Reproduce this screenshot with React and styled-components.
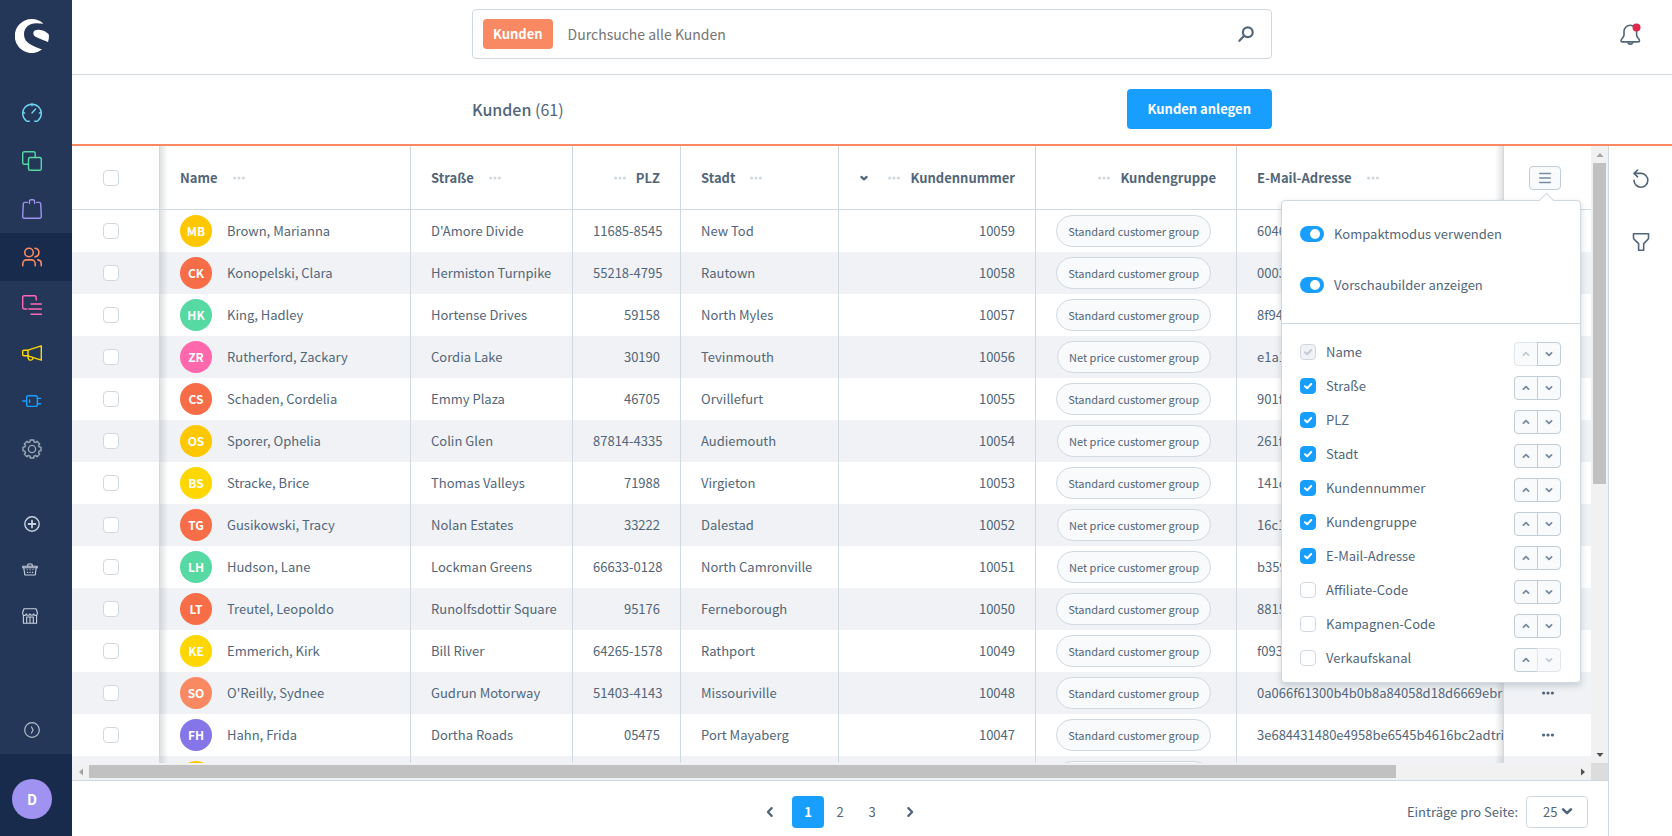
import React, { useState } from 'react';
import styled, { createGlobalStyle, css } from 'styled-components';

const GlobalStyle = createGlobalStyle`
  * {
    box-sizing: border-box;
  }

  body {
    margin: 0;
    background: #fff;
    color: #52667a;
    font-family: 'Noto Sans CJK SC', 'Open Sans', sans-serif;
    font-size: 13px;
    line-height: 20px;
  }

  button, input, select {
    font-family: inherit;
    font-size: inherit;
    line-height: inherit;
    color: inherit;
    margin: 0;
    padding: 0;
  }

  button {
    background: none;
    border: none;
    cursor: pointer;
  }

  svg {
    display: block;
    flex: none;
  }
`;

const Layout = styled.div`
  display: flex;
  height: 100vh;
  overflow: hidden;
`;

/* ---------- main menu ---------- */

const Menu = styled.aside`
  width: 72px;
  flex: none;
  display: flex;
  flex-direction: column;
  background: #243758;
`;

const Logo = styled.a`
  display: flex;
  justify-content: center;
  height: 89px;
  padding-top: 19px;
  padding-right: 8px;
  color: #fff;
`;

const MenuList = styled.nav`
  display: flex;
  flex-direction: column;
  margin-bottom: 28px;
`;

const MenuLink = styled.a`
  display: flex;
  align-items: center;
  height: ${props => (props.$small ? 46 : 48)}px;
  padding-left: ${props => props.$indent || 22}px;
  color: ${props => props.$color};
  background: ${props => (props.$active ? '#182b4d' : 'transparent')};
`;

const MenuToggle = styled.button`
  display: flex;
  align-items: center;
  justify-content: center;
  height: 48px;
  padding-right: 8px;
  margin-top: auto;
  color: #b3bfcc;
`;

const UserArea = styled.div`
  height: 82px;
  flex: none;
  padding: 25px 12px;
  background: #182b4d;
`;

const UserButton = styled.button`
  width: 40px;
  height: 40px;
  border-radius: 50%;
  background: #a092f0;
  color: #fff;
  font-size: 14px;
  font-weight: 700;
`;

/* ---------- page head ---------- */

const Page = styled.div`
  flex: 1;
  min-width: 0;
  display: flex;
  flex-direction: column;
`;

const HeadGrid = styled.div`
  display: grid;
  grid-template-columns: 1fr minmax(0, 800px) 1fr;
  flex: none;
`;

const SearchHeader = styled(HeadGrid)`
  height: 75px;
  padding-top: 9px;
  border-bottom: 1px solid #d1d9e0;
`;

const SearchBar = styled.div`
  grid-column: 2;
  display: flex;
  align-items: center;
  height: 50px;
  padding: 0 17px 0 10px;
  border: 1px solid #d1d9e0;
  border-radius: 4px;
`;

const SearchType = styled.button`
  height: 30px;
  padding: 0 10px;
  border-radius: 4px;
  background: #f88962;
  color: #fff;
  font-weight: 700;
`;

const SearchInput = styled.input`
  flex: 1;
  min-width: 0;
  padding: 0 15px;
  border: none;
  outline: none;
  font-size: 14px;

  &::placeholder {
    color: #757575;
  }
`;

const IconButton = styled.button`
  display: flex;
  align-items: center;
  justify-content: center;
`;

const Notifications = styled.div`
  display: flex;
  justify-content: flex-end;
  align-items: center;
  height: 50px;
  padding-right: 31px;
`;

const SmartBar = styled(HeadGrid)`
  height: 71px;
  align-items: center;
  padding-bottom: 1px;
  border-bottom: 2px solid #f88962;
`;

const SmartBarContent = styled.div`
  grid-column: 2;
  display: flex;
  align-items: center;
  justify-content: space-between;
`;

const Title = styled.h1`
  margin: 0;
  font-size: 16px;
  line-height: 24px;
  font-weight: 500;

  span {
    font-weight: 400;
  }
`;

const PrimaryButton = styled.button`
  height: 40px;
  padding: 0 21px;
  border-radius: 4px;
  background: #189eff;
  color: #fff;
  font-weight: 700;
`;

/* ---------- content ---------- */

const Body = styled.div`
  flex: 1;
  min-height: 0;
  display: flex;
`;

const Listing = styled.main`
  flex: 1;
  min-width: 0;
  display: flex;
  flex-direction: column;
`;

const SideTools = styled.aside`
  width: 64px;
  flex: none;
  display: flex;
  flex-direction: column;
  border-left: 1px solid #d1d9e0;

  button {
    height: 64px;
  }
`;

const ScrollFrame = styled.div`
  flex: 1;
  min-height: 0;
  display: grid;
  grid-template-columns: minmax(0, 1fr) 17px;
  grid-template-rows: minmax(0, 1fr) 17px;
  border-bottom: 1px solid #d1d9e0;
`;

const TableWrap = styled.div`
  overflow: hidden;
`;

const ScrollBar = styled.div`
  display: flex;
  flex-direction: ${props => (props.$vertical ? 'column' : 'row')};
  background: #f1f1f1;
`;

const ScrollArrow = styled.div`
  width: 17px;
  height: 17px;
  display: flex;
  align-items: center;
  justify-content: center;
  color: ${props => (props.$off ? '#a3a3a3' : '#505050')};
`;

const ScrollTrack = styled.div`
  flex: 1;
  padding: ${props => (props.$vertical ? '0 2px' : '2px 0')};
`;

const ScrollThumb = styled.div`
  width: ${props => (props.$vertical ? '100%' : props.$size)};
  height: ${props => (props.$vertical ? props.$size : '100%')};
  background: #c1c1c1;
`;

const ScrollCorner = styled.div`
  background: #dcdcdc;
`;

const Table = styled.table`
  width: 100%;
  table-layout: fixed;
  border-collapse: separate;
  border-spacing: 0;
`;

const cell = css`
  padding: 0 20px;
  border-right: 1px solid #d1d9e0;
  text-align: ${props => (props.$right ? 'right' : 'left')};
  white-space: nowrap;
  overflow: hidden;
`;

const shadowAfter = css`
  background-image: linear-gradient(to right, rgba(60, 70, 80, 0.16), rgba(60, 70, 80, 0));
  background-size: 8px 100%;
  background-repeat: no-repeat;
`;

const shadowBefore = css`
  border-right: none;
  background-image: linear-gradient(to left, rgba(60, 70, 80, 0.16), rgba(60, 70, 80, 0));
  background-size: 8px 100%;
  background-position: right top;
  background-repeat: no-repeat;
`;

const HeadCell = styled.th`
  ${cell}
  height: 64px;
  border-bottom: 1px solid #d1d9e0;
  font-weight: 700;
  ${props => props.$first && shadowAfter}
  ${props => props.$last && shadowBefore}
`;

const HeadLabel = styled.div`
  display: flex;
  align-items: center;
  flex-direction: ${props => (props.$right ? 'row-reverse' : 'row')};
  gap: ${props => (props.$right ? 10 : 15)}px;
`;

const HeadMenu = styled(IconButton)`
  color: #d1d9e0;
`;

const SortMark = styled.span`
  padding-right: 10px;
`;

const Cell = styled.td`
  ${cell}
  height: 42px;
  ${props => props.$first && shadowAfter}
  ${props => props.$last && shadowBefore}
`;

const Row = styled.tr`
  background: #fff;

  &:nth-child(even) {
    background: #f0f2f5;
  }
`;

const SelectHead = styled(HeadCell)`
  padding: 0 0 0 31px;
`;

const SelectCell = styled(Cell)`
  padding: 0 0 0 31px;
`;

const ActionHead = styled.th`
  position: relative;
  height: 64px;
  padding: 0 30px 0 0;
  border-left: 1px solid #d1d9e0;
  border-bottom: 1px solid #d1d9e0;
  text-align: left;
  font-weight: 400;
`;

const ActionCell = styled.td`
  padding: 0;
  border-left: 1px solid #d1d9e0;

  button {
    width: 100%;
  }
`;

const Customer = styled.div`
  display: flex;
  align-items: center;
  gap: 15px;
`;

const Avatar = styled.span`
  width: 32px;
  height: 32px;
  flex: none;
  border-radius: 50%;
  background: ${props => props.$color};
  color: #fff;
  font-size: 12px;
  font-weight: 700;
  line-height: 31px;
  text-align: center;
`;

const Pill = styled.span`
  display: block;
  width: fit-content;
  height: 32px;
  margin: 0 5px 0 auto;
  padding: 0 11px;
  border: 1px solid #d1d9e0;
  border-radius: 16px;
  background: #f9fafb;
  font-size: 11px;
  line-height: 30px;
`;

const Checkbox = styled.input.attrs({ type: 'checkbox' })`
  appearance: none;
  display: block;
  width: 16px;
  height: 16px;
  flex: none;
  border: 1px solid #d1d9e0;
  border-radius: 4px;
  background: #fff center / 14px 14px no-repeat;

  &:checked {
    border-color: #189eff;
    background-color: #189eff;
    background-image: url("data:image/svg+xml,%3Csvg xmlns='http://www.w3.org/2000/svg' viewBox='0 0 14 14' fill='none' stroke='%23fff' stroke-width='2' stroke-linecap='round' stroke-linejoin='round'%3E%3Cpath d='M4 7.2l2.2 2.1L10.2 5'/%3E%3C/svg%3E");
  }

  &:disabled {
    border-color: #d1d9e0;
    background-color: #f0f2f5;
    background-image: url("data:image/svg+xml,%3Csvg xmlns='http://www.w3.org/2000/svg' viewBox='0 0 14 14' fill='none' stroke='%23c2ccd6' stroke-width='2' stroke-linecap='round' stroke-linejoin='round'%3E%3Cpath d='M4 7.2l2.2 2.1L10.2 5'/%3E%3C/svg%3E");
  }
`;

/* ---------- column settings ---------- */

const SettingsButton = styled(IconButton)`
  width: 32px;
  height: 24px;
  margin-left: auto;
  border: 1px solid #c2ccd6;
  border-radius: 4px;
  background: #f9fafb;
  color: #758ca3;
`;

const Popover = styled.div`
  position: absolute;
  top: 54px;
  right: 10px;
  z-index: 10;
  width: 300px;
  border: 1px solid #d1d9e0;
  border-radius: 4px;
  background: #fff;
  box-shadow: 0 3px 6px rgba(120, 138, 155, 0.35);

  &::before {
    content: '';
    position: absolute;
    top: -6px;
    right: 28px;
    width: 10px;
    height: 10px;
    border: 1px solid #d1d9e0;
    border-right: none;
    border-bottom: none;
    background: #fff;
    transform: rotate(45deg);
  }
`;

const SwitchGroup = styled.div`
  display: flex;
  flex-direction: column;
  gap: 31px;
  padding: 23px 18px 28px;
  border-bottom: 1px solid #d1d9e0;
`;

const SwitchLabel = styled.label`
  display: flex;
  align-items: center;
  gap: 10px;
`;

const Switch = styled.input.attrs({ type: 'checkbox', role: 'switch' })`
  appearance: none;
  display: flex;
  width: 24px;
  height: 16px;
  padding: 3px 4px;
  border-radius: 8px;
  background: #c2ccd6;

  &::before {
    content: '';
    width: 10px;
    height: 10px;
    border-radius: 50%;
    background: #fff;
  }

  &:checked {
    justify-content: flex-end;
    background: #189eff;
  }
`;

const ColumnList = styled.ul`
  margin: 0;
  padding: 13px 19px 5px 18px;
  list-style: none;
`;

const ColumnItem = styled.li`
  display: flex;
  align-items: center;
  justify-content: space-between;
  height: 34px;
`;

const ColumnLabel = styled.label`
  display: flex;
  align-items: center;
  gap: 10px;
  padding-bottom: 4px;
`;

const MoveButtons = styled.div`
  display: flex;
`;

const MoveButton = styled(IconButton)`
  width: 24px;
  height: 24px;
  border: 1px solid #c2ccd6;
  border-radius: 4px 0 0 4px;
  background: #f9fafb;
  color: #758ca3;

  & + & {
    margin-left: -1px;
    border-radius: 0 4px 4px 0;
  }

  &:disabled {
    border-color: #e1e6eb;
    color: #c2ccd6;
  }
`;

/* ---------- pagination ---------- */

const Footer = styled.footer`
  display: grid;
  grid-template-columns: 1fr auto 1fr;
  align-items: start;
  height: 55px;
  flex: none;
  padding: 15px 20px 0;
`;

const Pages = styled.div`
  grid-column: 2;
  display: flex;
`;

const PageButton = styled.button`
  width: 32px;
  height: 32px;
  border-radius: 4px;
  background: ${props => (props.$active ? '#189eff' : 'none')};
  color: ${props => (props.$active ? '#fff' : 'inherit')};
  font-weight: ${props => (props.$active ? 700 : 400)};
`;

const PageArrow = styled(IconButton)`
  width: 44px;
  height: 32px;
`;

const PerPage = styled.label`
  display: flex;
  align-items: center;
  justify-content: flex-end;
  gap: 8px;
`;

const SelectBox = styled.span`
  position: relative;

  svg {
    position: absolute;
    top: 9px;
    right: 15px;
    pointer-events: none;
  }
`;

const Select = styled.select`
  appearance: none;
  display: block;
  width: 62px;
  height: 32px;
  padding-left: 16px;
  border: 1px solid #d1d9e0;
  border-radius: 4px;
  background: #fff;
`;

/* ---------- icons ---------- */

const Icon = ({ size = 20, box = 20, width = 1.4, children }) => (
  <svg
    width={size}
    height={size}
    viewBox={`0 0 ${box} ${box}`}
    fill="none"
    stroke="currentColor"
    strokeWidth={width}
    strokeLinecap="round"
    strokeLinejoin="round"
    aria-hidden="true"
  >
    {children}
  </svg>
);

const ShopLogo = () => (
  <svg width="34" height="34" viewBox="0 0 34 34" fill="currentColor" aria-hidden="true">
    <path d="M28.4 4.7A17 17 0 1 0 27 30.6C18.500 27 9 24.500 9 15.500 9 8.500 14 4.300 21.500 4.200c2.500 0 4.500.2 6.900.5z" />
    <path d="M18.300 14c.1-2.200 2.200-3.300 5.700-3.200 4 .1 7 1.900 9.700 4.500.5 2.700.2 5.200-.7 7.700-4-1.700-8.700-3.100-12-4.900-1.900-1.100-2.700-2.500-2.700-4.100z" />
  </svg>
);

const DashboardIcon = () => (
  <Icon>
    <path d="M7.3 18.3H5.6Q4.6 18.3 4 17.6A9.3 9.3 0 1 1 16 17.6Q15.4 18.3 14.4 18.3H12.7" />
    <path d="M10 .7v2M.7 10h2M17.3 10h2M10 10l3.6-4" />
  </Icon>
);

const ProductsIcon = () => (
  <Icon>
    <rect x="6.5" y="6.5" width="12.8" height="12.8" rx="1.6" />
    <path d="M6.5 13.2H2.3A1.6 1.6 0 0 1 .7 11.6V2.3A1.6 1.6 0 0 1 2.3.7h9.3a1.6 1.6 0 0 1 1.6 1.6v4.2" />
  </Icon>
);

const OrdersIcon = () => (
  <Icon>
    <path d="M7.4 4.6V2.4A1.7 1.7 0 0 1 9.1.7h1.8a1.7 1.7 0 0 1 1.7 1.7v2.2" />
    <path d="M5.2 3.4H3A1.7 1.7 0 0 0 1.3 5L.7 17.6a1.6 1.6 0 0 0 1.6 1.7h15.4a1.6 1.6 0 0 0 1.6-1.7L18.7 5A1.7 1.7 0 0 0 17 3.4h-2.2" />
  </Icon>
);

const CustomersIcon = () => (
  <Icon width={1.6}>
    <circle cx="7" cy="5.5" r="4.3" />
    <path d="M13 1.2c2.4.3 3.9 2.1 3.9 4.3S15.4 9.5 13 9.8" />
    <path d="M.8 18.8v-2.3a3.6 3.6 0 0 1 3.6-3.6h5.2a3.6 3.6 0 0 1 3.6 3.6v2.3M15.9 12.9a3.6 3.6 0 0 1 3.3 3.6v2.3" />
  </Icon>
);

const ContentIcon = () => (
  <Icon>
    <path d="M14.2 5V2.2A1.5 1.5 0 0 0 12.7.7H2.2A1.5 1.5 0 0 0 .7 2.2v10.3A1.5 1.5 0 0 0 2.2 14h2.6" />
    <path d="M9 9h10.500M6.800 14h12.700M9 19.200h10.500" />
  </Icon>
);

const MarketingIcon = () => (
  <Icon>
    <path d="M6 7.2L19.3 2.8v14.4L6 12.8z" />
    <path d="M6 7.2H1.7a1 1 0 0 0-1 1v3.6a1 1 0 0 0 1 1H6M5.8 13l.6 2.600a2 2 0 0 0 2.400 1.500l.8-.2a1.800 1.800 0 0 0 1.300-2" />
  </Icon>
);

const PlugIcon = () => (
  <Icon>
    <path d="M.7 10h3.9M15.4 7.4h3.200M15.4 12.8h3.200M7.600 9v2.200" />
    <rect x="4.6" y="4.8" width="10.8" height="10.6" rx="2" />
  </Icon>
);

// outline of the gear, four points for every tooth
const TEETH = 8;
const gearPoints = Array.from({ length: TEETH }, (_, i) => {
  const base = (i * Math.PI * 2) / TEETH - Math.PI / 2;
  return [[-0.2, 9.2], [0.2, 9.2], [0.25, 7.5], [0.53, 7.5]]
    .map(([a, r]) => `${10 + r * Math.cos(base + a)},${10 + r * Math.sin(base + a)}`)
    .join(' ');
}).join(' ');

const CogIcon = () => (
  <Icon>
    <polygon points={gearPoints} />
    <circle cx="10" cy="10" r="3.6" />
  </Icon>
);

const PlusIcon = () => (
  <Icon size={16} box={16}>
    <circle cx="8" cy="8" r="7.2" />
    <path d="M8 4.6v6.8M4.6 8h6.8" strokeWidth="1.8" />
  </Icon>
);

const BasketIcon = () => (
  <Icon size={16} box={16} width={1.1}>
    <path d="M.8 4.2h14.400v1.600H.8zM1.800 5.800l1 7.200h10.400l1-7.200M5.400 4l.8-2h3.600l.8 2" />
    <path d="M5 7.800h.3M7.900 7.800h.3M10.800 7.800h.3M5.400 10.400h.3M7.900 10.400h.3M10.400 10.400h.3" />
  </Icon>
);

const StoreIcon = () => (
  <Icon size={16} box={16} width={1.1}>
    <path d="M2 .7h12l1.300 3.600v1.200a1.800 1.800 0 0 1-3.600.3 1.900 1.900 0 0 1-3.700 0 1.900 1.900 0 0 1-3.700 0A1.800 1.800 0 0 1 .7 5.500V4.300zM1.400 7.200v8.100h13.200V7.200M4.700 15.300V9h6.600v6.300M8 9v6.300" />
  </Icon>
);

const ExpandIcon = () => (
  <Icon size={16} box={16} width={1.2}>
    <circle cx="8" cy="8" r="7.3" />
    <path d="M7.5 5l1.600 3-1.600 3" />
  </Icon>
);

const SearchIcon = () => (
  <Icon size={16} box={16} width={2.2}>
    <circle cx="9.8" cy="6.2" r="4.9" />
    <path d="M6 10l-4.600 4.800" />
  </Icon>
);

const BellIcon = () => (
  <svg width="21" height="22" viewBox="0 0 21 22" fill="none" stroke="currentColor" strokeWidth="1.6" strokeLinejoin="round" aria-hidden="true">
    <path d="M4 10V8.500a6.300 6.300 0 0 1 12.600 0V12c0 2.600 2.900 3.300 2.900 5.800 0 .8-.5 1.100-1.300 1.100H2.300c-.8 0-1.300-.3-1.300-1.100C1 15.300 4 14.600 4 12z" />
    <path d="M8 19.200a2.300 1.900 0 0 0 4.600 0" />
    <circle cx="16.5" cy="4.5" r="4" fill="#de294c" stroke="none" />
  </svg>
);

const ResetIcon = () => (
  <Icon size={20} width={1.6}>
    <path d="M3.500 5.400h6.900a6.900 6.900 0 1 1-7.400 6.900M6.600 2L3 5.400l3.600 3.400" />
  </Icon>
);

const FilterIcon = () => (
  <Icon size={20} width={1.6}>
    <path d="M2.500 1.800h15v4.200q0 .8-.6 1.400l-4.200 4.200v6.600H7.600v-6.600L3.200 7.400q-.7-.6-.7-1.400z" />
  </Icon>
);

const DotsIcon = () => (
  <svg width="12" height="4" viewBox="0 0 12 4" fill="currentColor" aria-hidden="true">
    <circle cx="1.6" cy="2" r="1.6" />
    <circle cx="6" cy="2" r="1.6" />
    <circle cx="10.4" cy="2" r="1.6" />
  </svg>
);

const ListIcon = () => (
  <Icon size={12} box={12} width={1.5}>
    <path d="M.7 1.500h10.600M.7 6h10.600M.7 10.500h10.600" />
  </Icon>
);

const turns = { down: 0, left: 90, up: 180, right: 270 };

const Chevron = ({ to = 'down', size = 8, width = 1.8 }) => (
  <Icon size={size} box={8} width={width}>
    <path d="M1.400 2.900L4 5.400l2.600-2.500" transform={`rotate(${turns[to]} 4 4)`} />
  </Icon>
);

const Triangle = ({ to }) => (
  <svg width="8" height="8" viewBox="0 0 8 8" fill="currentColor" aria-hidden="true">
    <path d="M.5 2h7L4 6z" transform={`rotate(${turns[to]} 4 4)`} />
  </svg>
);

/* ---------- data ---------- */

const menuItems = [
  { label: 'Dashboard', color: '#6ed5f0', icon: DashboardIcon },
  { label: 'Kataloge', color: '#57d9a3', icon: ProductsIcon },
  { label: 'Bestellungen', color: '#a092f0', icon: OrdersIcon },
  { label: 'Kunden', color: '#f88962', icon: CustomersIcon, active: true },
  { label: 'Inhalte', color: '#ff68b4', icon: ContentIcon },
  { label: 'Marketing', color: '#ffd700', icon: MarketingIcon },
  { label: 'Erweiterungen', color: '#189eff', icon: PlugIcon },
  { label: 'Einstellungen', color: '#9aa8b5', icon: CogIcon },
];

const channelItems = [
  { label: 'Verkaufskanal anlegen', indent: 24, icon: PlusIcon },
  { label: 'Headless', indent: 22, icon: BasketIcon },
  { label: 'Storefront', indent: 22, icon: StoreIcon },
];

const STD = 'Standard customer group';
const NET = 'Net price customer group';

const customers = [
  { initials: 'MB', color: '#ffc700', name: 'Brown, Marianna', street: "D'Amore Divide", zip: '11685-8545', city: 'New Tod', number: '10059', group: STD, mail: '6046' },
  { initials: 'CK', color: '#f76d48', name: 'Konopelski, Clara', street: 'Hermiston Turnpike', zip: '55218-4795', city: 'Rautown', number: '10058', group: STD, mail: '0003' },
  { initials: 'HK', color: '#57d9a3', name: 'King, Hadley', street: 'Hortense Drives', zip: '59158', city: 'North Myles', number: '10057', group: STD, mail: '8f94' },
  { initials: 'ZR', color: '#ff68ac', name: 'Rutherford, Zackary', street: 'Cordia Lake', zip: '30190', city: 'Tevinmouth', number: '10056', group: NET, mail: 'e1a1' },
  { initials: 'CS', color: '#f76d48', name: 'Schaden, Cordelia', street: 'Emmy Plaza', zip: '46705', city: 'Orvillefurt', number: '10055', group: STD, mail: '901f' },
  { initials: 'OS', color: '#ffc700', name: 'Sporer, Ophelia', street: 'Colin Glen', zip: '87814-4335', city: 'Audiemouth', number: '10054', group: NET, mail: '261f' },
  { initials: 'BS', color: '#ffd700', name: 'Stracke, Brice', street: 'Thomas Valleys', zip: '71988', city: 'Virgieton', number: '10053', group: STD, mail: '141d' },
  { initials: 'TG', color: '#f76d48', name: 'Gusikowski, Tracy', street: 'Nolan Estates', zip: '33222', city: 'Dalestad', number: '10052', group: NET, mail: '16c1' },
  { initials: 'LH', color: '#57d9a3', name: 'Hudson, Lane', street: 'Lockman Greens', zip: '66633-0128', city: 'North Camronville', number: '10051', group: NET, mail: 'b359' },
  { initials: 'LT', color: '#f76d48', name: 'Treutel, Leopoldo', street: 'Runolfsdottir Square', zip: '95176', city: 'Ferneborough', number: '10050', group: STD, mail: '8815' },
  { initials: 'KE', color: '#ffd700', name: 'Emmerich, Kirk', street: 'Bill River', zip: '64265-1578', city: 'Rathport', number: '10049', group: STD, mail: 'f093' },
  { initials: 'SO', color: '#f88962', name: "O'Reilly, Sydnee", street: 'Gudrun Motorway', zip: '51403-4143', city: 'Missouriville', number: '10048', group: STD, mail: '0a066f61300b4b0b8a84058d18d6669ebritn' },
  { initials: 'FH', color: '#8475e8', name: 'Hahn, Frida', street: 'Dortha Roads', zip: '05475', city: 'Port Mayaberg', number: '10047', group: STD, mail: '3e684431480e4958be6545b4616bc2adtrist' },
  { initials: '', color: '#ffc700', name: '', street: '', zip: '', city: '', number: '10046', group: STD, mail: '' },
];

const columns = [
  { label: 'Name', width: 251 },
  { label: 'Straße', width: 162 },
  { label: 'PLZ', width: 108, right: true },
  { label: 'Stadt', width: 158 },
  { label: 'Kundennummer', width: 197, right: true, sorted: true },
  { label: 'Kundengruppe', width: 201, right: true },
  { label: 'E-Mail-Adresse' },
];

const columnSettings = [
  { label: 'Name', visible: true, locked: true },
  { label: 'Straße', visible: true },
  { label: 'PLZ', visible: true },
  { label: 'Stadt', visible: true },
  { label: 'Kundennummer', visible: true },
  { label: 'Kundengruppe', visible: true },
  { label: 'E-Mail-Adresse', visible: true },
  { label: 'Affiliate-Code', visible: false },
  { label: 'Kampagnen-Code', visible: false },
  { label: 'Verkaufskanal', visible: false },
];

/* ---------- components ---------- */

function MainMenu() {
  return (
    <Menu>
      <Logo href="#" aria-label="Shopware">
        <ShopLogo />
      </Logo>
      <MenuList>
        {menuItems.map(({ label, color, icon: ItemIcon, active }) => (
          <MenuLink key={label} href="#" aria-label={label} $color={color} $active={active}>
            <ItemIcon />
          </MenuLink>
        ))}
      </MenuList>
      <MenuList>
        {channelItems.map(({ label, indent, icon: ItemIcon }) => (
          <MenuLink key={label} href="#" aria-label={label} $small $color="#c8d2de" $indent={indent}>
            <ItemIcon />
          </MenuLink>
        ))}
      </MenuList>
      <MenuToggle aria-label="Menü ausklappen">
        <ExpandIcon />
      </MenuToggle>
      <UserArea>
        <UserButton>D</UserButton>
      </UserArea>
    </Menu>
  );
}

function ColumnSettings() {
  const [items, setItems] = useState(columnSettings);

  const toggle = (label) =>
    setItems(items.map(item => (item.label === label ? { ...item, visible: !item.visible } : item)));

  const move = (index, step) => {
    const next = [...items];
    [next[index], next[index + step]] = [next[index + step], next[index]];
    setItems(next);
  };

  return (
    <Popover>
      <SwitchGroup>
        <SwitchLabel>
          <Switch defaultChecked />
          Kompaktmodus verwenden
        </SwitchLabel>
        <SwitchLabel>
          <Switch defaultChecked />
          Vorschaubilder anzeigen
        </SwitchLabel>
      </SwitchGroup>
      <ColumnList>
        {items.map((item, index) => (
          <ColumnItem key={item.label}>
            <ColumnLabel>
              <Checkbox checked={item.visible} disabled={item.locked} onChange={() => toggle(item.label)} />
              {item.label}
            </ColumnLabel>
            <MoveButtons>
              <MoveButton aria-label="Nach oben" disabled={index === 0} onClick={() => move(index, -1)}>
                <Chevron to="up" />
              </MoveButton>
              <MoveButton aria-label="Nach unten" disabled={index === items.length - 1} onClick={() => move(index, 1)}>
                <Chevron />
              </MoveButton>
            </MoveButtons>
          </ColumnItem>
        ))}
      </ColumnList>
    </Popover>
  );
}

function CustomerTable() {
  const [showSettings, setShowSettings] = useState(true);

  return (
    <Table>
      <colgroup>
        <col width="88" />
        {columns.map(column => (
          <col key={column.label} width={column.width} />
        ))}
        <col width="88" />
      </colgroup>
      <thead>
        <tr>
          <SelectHead>
            <Checkbox aria-label="Alle auswählen" />
          </SelectHead>
          {columns.map(({ label, right, sorted }, index) => (
            <HeadCell key={label} $right={right} $first={index === 0} $last={index === columns.length - 1}>
              <HeadLabel $right={right}>
                {label}
                <HeadMenu aria-label={`Spalte ${label}`}>
                  <DotsIcon />
                </HeadMenu>
                {sorted && (
                  <SortMark>
                    <Chevron width={2.2} />
                  </SortMark>
                )}
              </HeadLabel>
            </HeadCell>
          ))}
          <ActionHead>
            <SettingsButton aria-label="Spalten" onClick={() => setShowSettings(!showSettings)}>
              <ListIcon />
            </SettingsButton>
            {showSettings && <ColumnSettings />}
          </ActionHead>
        </tr>
      </thead>
      <tbody>
        {customers.map(customer => (
          <Row key={customer.number}>
            <SelectCell>
              <Checkbox aria-label={customer.name} />
            </SelectCell>
            <Cell $first>
              <Customer>
                <Avatar $color={customer.color}>{customer.initials}</Avatar>
                {customer.name}
              </Customer>
            </Cell>
            <Cell>{customer.street}</Cell>
            <Cell $right>{customer.zip}</Cell>
            <Cell>{customer.city}</Cell>
            <Cell $right>{customer.number}</Cell>
            <Cell>
              <Pill>{customer.group}</Pill>
            </Cell>
            <Cell $last>{customer.mail}</Cell>
            <ActionCell>
              <IconButton aria-label="Aktionen">
                <DotsIcon />
              </IconButton>
            </ActionCell>
          </Row>
        ))}
      </tbody>
    </Table>
  );
}

function Pagination() {
  const [page, setPage] = useState(1);

  return (
    <Footer>
      <Pages>
        <PageArrow aria-label="Vorherige Seite" onClick={() => setPage(Math.max(1, page - 1))}>
          <Chevron to="left" size={12} width={1.5} />
        </PageArrow>
        {[1, 2, 3].map(number => (
          <PageButton key={number} $active={number === page} onClick={() => setPage(number)}>
            {number}
          </PageButton>
        ))}
        <PageArrow aria-label="Nächste Seite" onClick={() => setPage(Math.min(3, page + 1))}>
          <Chevron to="right" size={12} width={1.5} />
        </PageArrow>
      </Pages>
      <PerPage>
        Einträge pro Seite:
        <SelectBox>
          <Select defaultValue="25">
            <option>10</option>
            <option>25</option>
            <option>50</option>
          </Select>
          <Chevron size={12} />
        </SelectBox>
      </PerPage>
    </Footer>
  );
}

function App() {
  return (
    <>
      <GlobalStyle />
      <Layout>
        <MainMenu />
        <Page>
          <SearchHeader>
            <SearchBar>
              <SearchType>Kunden</SearchType>
              <SearchInput placeholder="Durchsuche alle Kunden" aria-label="Suche" />
              <IconButton aria-label="Suchen">
                <SearchIcon />
              </IconButton>
            </SearchBar>
            <Notifications>
              <IconButton aria-label="Benachrichtigungen">
                <BellIcon />
              </IconButton>
            </Notifications>
          </SearchHeader>
          <SmartBar>
            <SmartBarContent>
              <Title>
                Kunden <span>(61)</span>
              </Title>
              <PrimaryButton>Kunden anlegen</PrimaryButton>
            </SmartBarContent>
          </SmartBar>
          <Body>
            <Listing>
              <ScrollFrame>
                <TableWrap>
                  <CustomerTable />
                </TableWrap>
                <ScrollBar $vertical>
                  <ScrollArrow $off><Triangle to="up" /></ScrollArrow>
                  <ScrollTrack $vertical><ScrollThumb $vertical $size="55%" /></ScrollTrack>
                  <ScrollArrow><Triangle to="down" /></ScrollArrow>
                </ScrollBar>
                <ScrollBar>
                  <ScrollArrow $off><Triangle to="left" /></ScrollArrow>
                  <ScrollTrack><ScrollThumb $size="88%" /></ScrollTrack>
                  <ScrollArrow><Triangle to="right" /></ScrollArrow>
                </ScrollBar>
                <ScrollCorner />
              </ScrollFrame>
              <Pagination />
            </Listing>
            <SideTools>
              <IconButton aria-label="Aktualisieren">
                <ResetIcon />
              </IconButton>
              <IconButton aria-label="Filter">
                <FilterIcon />
              </IconButton>
            </SideTools>
          </Body>
        </Page>
      </Layout>
    </>
  );
}

export default App;
